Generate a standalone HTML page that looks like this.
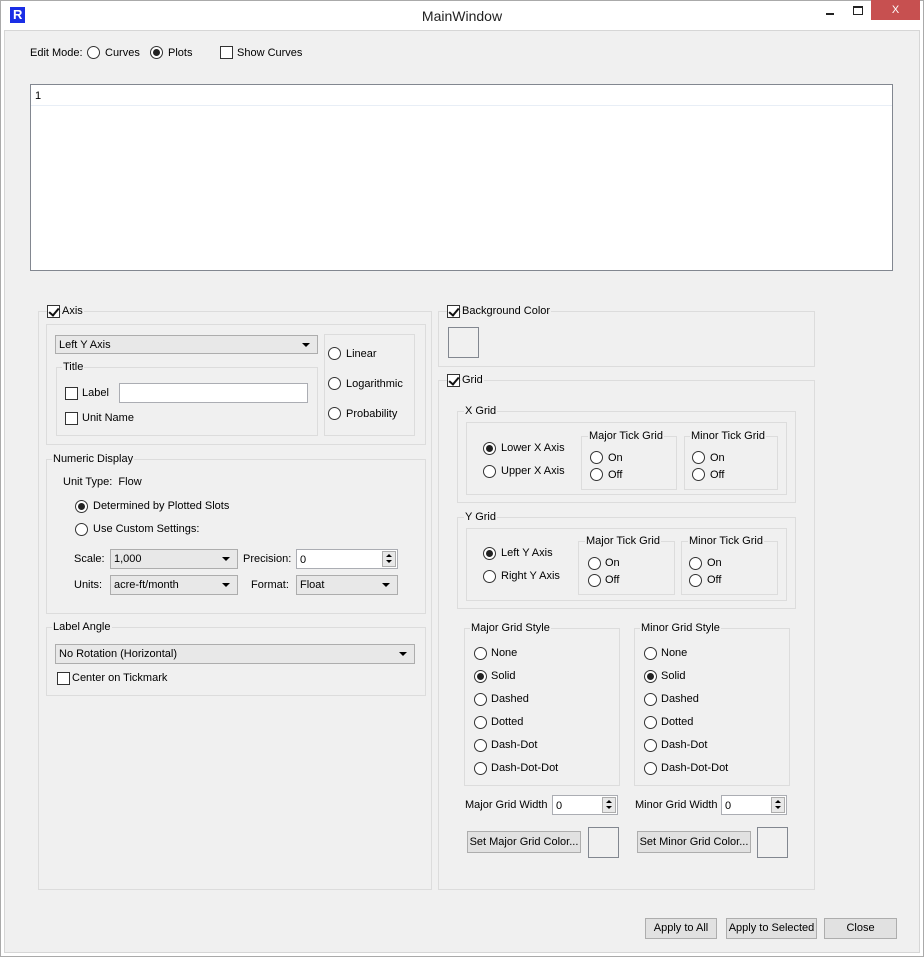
<!DOCTYPE html>
<html><head><meta charset="utf-8"><style>
*{box-sizing:border-box}
body{margin:0;width:924px;height:957px;position:relative;background:#fff;font-family:"Liberation Sans",sans-serif;font-size:11px;color:#000;overflow:hidden}
div,span{position:absolute}
.win{left:0;top:0;width:924px;height:957px;border:1px solid #aaa}
.content{left:4px;top:30px;width:916px;height:923px;background:#f0f0f0;border:1px solid #d6d6d6}
.g{border:1px solid #dcdcdc}
.t{white-space:nowrap;line-height:13px}
.gt{white-space:nowrap;line-height:13px;background:#f0f0f0;padding:0 1px}
.r{width:13px;height:13px;border:1px solid #333;border-radius:50%;background:#fff}
.r.on::after{content:"";position:absolute;left:2px;top:2px;width:7px;height:7px;border-radius:50%;background:#222}
.c{width:13px;height:13px;border:1px solid #333;background:#fff}
.c.on::after{content:"";position:absolute;left:3px;top:0px;width:4px;height:8px;border-right:2px solid #111;border-bottom:2px solid #111;transform:rotate(40deg)}
.cb{border:1px solid #adadad;background:#e8e8e8;padding:3px 0 0 3px;line-height:13px;white-space:nowrap}
.cb::after{content:"";position:absolute;right:7px;top:7px;border-left:4px solid transparent;border-right:4px solid transparent;border-top:4px solid #000}
.sp{border:1px solid #abadb3;background:#fff;padding:4px 0 0 3px;line-height:13px}
.sp b{position:absolute;right:1px;top:1px;width:14px;height:16px;border:1px solid #adadad;background:#e8e8e8}
.sp b::before{content:"";position:absolute;left:3px;top:2px;border-left:3px solid transparent;border-right:3px solid transparent;border-bottom:3px solid #000}
.sp b::after{content:"";position:absolute;left:3px;top:8px;border-left:3px solid transparent;border-right:3px solid transparent;border-top:3px solid #000}
.btn{border:1px solid #adadad;background:#e1e1e1;text-align:center;line-height:19px;white-space:nowrap}
.sw{border:1px solid #828790;background:#f0f0f0}
</style></head><body>
<div class="win"></div>
<div style="left:10px;top:7px;width:15px;height:16px;background:#1a2ee6"><span style="left:3px;top:1px;color:#fff;font-weight:bold;font-size:13px;line-height:14px">R</span></div>
<div class="t" style="left:0;width:924px;top:8px;text-align:center;font-size:14px;line-height:16px;color:#222">MainWindow</div>
<div style="left:826px;top:13px;width:8px;height:2px;background:#222"></div>
<div style="left:853px;top:6px;width:10px;height:9px;border:1px solid #222;border-top-width:2px"></div>
<div style="left:871px;top:0;width:49px;height:20px;background:#c75050;color:#fff;text-align:center;font-size:11px;line-height:20px">X</div>
<div class="content"></div>

<div class="t" style="left:30px;top:47px">Edit Mode:</div>
<div class="r" style="left:87px;top:46px"></div><div class="t" style="left:105px;top:47px">Curves</div>
<div class="r on" style="left:150px;top:46px"></div><div class="t" style="left:168px;top:47px">Plots</div>
<div class="c" style="left:220px;top:46px"></div><div class="t" style="left:237px;top:47px">Show Curves</div>

<div style="left:30px;top:84px;width:863px;height:187px;background:#fff;border:1px solid #828790"></div>
<div style="left:31px;top:105px;width:861px;height:1px;background:#e8eef6"></div>
<div class="t" style="left:35px;top:90px">1</div>

<!-- Axis -->
<div class="g" style="left:38px;top:311px;width:394px;height:579px"></div>
<div class="c on" style="left:47px;top:305px"></div><div class="gt" style="left:61px;top:305px">Axis</div>
<div class="g" style="left:46px;top:324px;width:380px;height:121px"></div>
<div class="cb" style="left:55px;top:335px;width:263px;height:19px">Left Y Axis</div>
<div class="g" style="left:56px;top:367px;width:262px;height:69px"></div><div class="gt" style="left:62px;top:361px">Title</div>
<div class="c" style="left:65px;top:387px"></div><div class="t" style="left:82px;top:387px">Label</div>
<div style="left:119px;top:383px;width:189px;height:20px;background:#fff;border:1px solid #abadb3"></div>
<div class="c" style="left:65px;top:412px"></div><div class="t" style="left:82px;top:412px">Unit Name</div>
<div class="g" style="left:324px;top:334px;width:91px;height:102px"></div>
<div class="r" style="left:328px;top:347px"></div><div class="t" style="left:346px;top:348px">Linear</div>
<div class="r" style="left:328px;top:377px"></div><div class="t" style="left:346px;top:378px">Logarithmic</div>
<div class="r" style="left:328px;top:407px"></div><div class="t" style="left:346px;top:408px">Probability</div>

<div class="g" style="left:46px;top:459px;width:380px;height:155px"></div><div class="gt" style="left:52px;top:453px">Numeric Display</div>
<div class="t" style="left:63px;top:476px">Unit Type:&nbsp; Flow</div>
<div class="r on" style="left:75px;top:500px"></div><div class="t" style="left:93px;top:500px">Determined by Plotted Slots</div>
<div class="r" style="left:75px;top:523px"></div><div class="t" style="left:93px;top:523px">Use Custom Settings:</div>
<div class="t" style="left:74px;top:553px">Scale:</div>
<div class="cb" style="left:110px;top:549px;width:128px;height:20px">1,000</div>
<div class="t" style="left:243px;top:553px">Precision:</div>
<div class="sp" style="left:296px;top:549px;width:102px;height:20px">0<b></b></div>
<div class="t" style="left:74px;top:579px">Units:</div>
<div class="cb" style="left:110px;top:575px;width:128px;height:20px">acre-ft/month</div>
<div class="t" style="left:251px;top:579px">Format:</div>
<div class="cb" style="left:296px;top:575px;width:102px;height:20px">Float</div>

<div class="g" style="left:46px;top:627px;width:380px;height:69px"></div><div class="gt" style="left:52px;top:621px">Label Angle</div>
<div class="cb" style="left:55px;top:644px;width:360px;height:20px">No Rotation (Horizontal)</div>
<div class="c" style="left:57px;top:672px"></div><div class="t" style="left:72px;top:672px">Center on Tickmark</div>

<!-- Right -->
<div class="g" style="left:438px;top:311px;width:377px;height:56px"></div>
<div class="c on" style="left:447px;top:305px"></div><div class="gt" style="left:461px;top:305px">Background Color</div>
<div class="sw" style="left:448px;top:327px;width:31px;height:31px"></div>

<div class="g" style="left:438px;top:380px;width:377px;height:510px"></div>
<div class="c on" style="left:447px;top:374px"></div><div class="gt" style="left:461px;top:374px">Grid</div>

<div class="g" style="left:457px;top:411px;width:339px;height:92px"></div><div class="gt" style="left:464px;top:405px">X Grid</div>
<div class="g" style="left:466px;top:422px;width:321px;height:73px"></div>
<div class="r on" style="left:483px;top:442px"></div><div class="t" style="left:501px;top:442px">Lower X Axis</div>
<div class="r" style="left:483px;top:465px"></div><div class="t" style="left:501px;top:465px">Upper X Axis</div>
<div class="g" style="left:581px;top:436px;width:96px;height:54px"></div><div class="gt" style="left:588px;top:430px">Major Tick Grid</div>
<div class="r" style="left:590px;top:451px"></div><div class="t" style="left:608px;top:452px">On</div>
<div class="r" style="left:590px;top:468px"></div><div class="t" style="left:608px;top:469px">Off</div>
<div class="g" style="left:684px;top:436px;width:94px;height:54px"></div><div class="gt" style="left:690px;top:430px">Minor Tick Grid</div>
<div class="r" style="left:692px;top:451px"></div><div class="t" style="left:710px;top:452px">On</div>
<div class="r" style="left:692px;top:468px"></div><div class="t" style="left:710px;top:469px">Off</div>

<div class="g" style="left:457px;top:517px;width:339px;height:92px"></div><div class="gt" style="left:464px;top:511px">Y Grid</div>
<div class="g" style="left:466px;top:528px;width:321px;height:73px"></div>
<div class="r on" style="left:483px;top:547px"></div><div class="t" style="left:501px;top:547px">Left Y Axis</div>
<div class="r" style="left:483px;top:570px"></div><div class="t" style="left:501px;top:570px">Right Y Axis</div>
<div class="g" style="left:578px;top:541px;width:97px;height:54px"></div><div class="gt" style="left:585px;top:535px">Major Tick Grid</div>
<div class="r" style="left:588px;top:557px"></div><div class="t" style="left:605px;top:557px">On</div>
<div class="r" style="left:588px;top:574px"></div><div class="t" style="left:605px;top:574px">Off</div>
<div class="g" style="left:681px;top:541px;width:97px;height:54px"></div><div class="gt" style="left:688px;top:535px">Minor Tick Grid</div>
<div class="r" style="left:689px;top:557px"></div><div class="t" style="left:707px;top:557px">On</div>
<div class="r" style="left:689px;top:574px"></div><div class="t" style="left:707px;top:574px">Off</div>

<div class="g" style="left:464px;top:628px;width:156px;height:158px"></div><div class="gt" style="left:470px;top:622px">Major Grid Style</div>
<div class="r" style="left:474px;top:647px"></div><div class="t" style="left:491px;top:647px">None</div>
<div class="r on" style="left:474px;top:670px"></div><div class="t" style="left:491px;top:670px">Solid</div>
<div class="r" style="left:474px;top:693px"></div><div class="t" style="left:491px;top:693px">Dashed</div>
<div class="r" style="left:474px;top:716px"></div><div class="t" style="left:491px;top:716px">Dotted</div>
<div class="r" style="left:474px;top:739px"></div><div class="t" style="left:491px;top:739px">Dash-Dot</div>
<div class="r" style="left:474px;top:762px"></div><div class="t" style="left:491px;top:762px">Dash-Dot-Dot</div>

<div class="g" style="left:634px;top:628px;width:156px;height:158px"></div><div class="gt" style="left:640px;top:622px">Minor Grid Style</div>
<div class="r" style="left:644px;top:647px"></div><div class="t" style="left:661px;top:647px">None</div>
<div class="r on" style="left:644px;top:670px"></div><div class="t" style="left:661px;top:670px">Solid</div>
<div class="r" style="left:644px;top:693px"></div><div class="t" style="left:661px;top:693px">Dashed</div>
<div class="r" style="left:644px;top:716px"></div><div class="t" style="left:661px;top:716px">Dotted</div>
<div class="r" style="left:644px;top:739px"></div><div class="t" style="left:661px;top:739px">Dash-Dot</div>
<div class="r" style="left:644px;top:762px"></div><div class="t" style="left:661px;top:762px">Dash-Dot-Dot</div>

<div class="t" style="left:465px;top:799px">Major Grid Width</div>
<div class="sp" style="left:552px;top:795px;width:66px;height:20px">0<b></b></div>
<div class="t" style="left:635px;top:799px">Minor Grid Width</div>
<div class="sp" style="left:721px;top:795px;width:66px;height:20px">0<b></b></div>
<div class="btn" style="left:467px;top:831px;width:114px;height:22px;line-height:20px">Set Major Grid Color...</div>
<div class="sw" style="left:588px;top:827px;width:31px;height:31px"></div>
<div class="btn" style="left:637px;top:831px;width:114px;height:22px;line-height:20px">Set Minor Grid Color...</div>
<div class="sw" style="left:757px;top:827px;width:31px;height:31px"></div>

<div class="btn" style="left:645px;top:918px;width:72px;height:21px">Apply to All</div>
<div class="btn" style="left:726px;top:918px;width:91px;height:21px">Apply to Selected</div>
<div class="btn" style="left:824px;top:918px;width:73px;height:21px">Close</div>
</body></html>
